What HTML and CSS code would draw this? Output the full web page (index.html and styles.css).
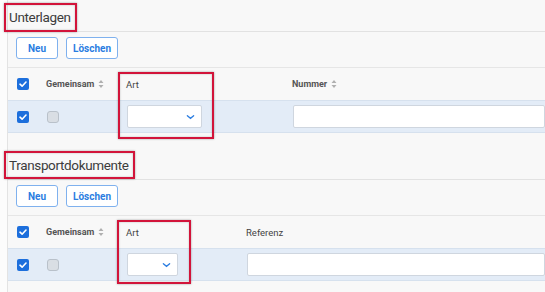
FILE: index.html
```html
<!DOCTYPE html>
<html lang="de">
<head>
<meta charset="utf-8">
<link rel="stylesheet" href="styles.css">
</head>
<body>
<div class="page">
  <section class="sec">
    <div class="title">Unterlagen</div>
    <div class="toolbar">
      <button class="btn btn-neu">Neu</button>
      <button class="btn btn-del">Löschen</button>
    </div>
    <div class="grid g1 head">
      <div class="cell"><span class="cb on"><svg viewBox="0 0 12 12"><path d="M3 6.2 5.1 8.2 9 4" fill="none" stroke="#fff" stroke-width="1.6" stroke-linecap="round" stroke-linejoin="round"/></svg></span></div>
      <div class="cell hb">Gemeinsam <span class="sort"><svg viewBox="0 0 6 10"><path d="M3 1 5.5 4H.5zM3 9 .5 6h5z" fill="#b0b0b0"/></svg></span></div>
      <div class="cell hn">Art</div>
      <div class="cell hb">Nummer <span class="sort"><svg viewBox="0 0 6 10"><path d="M3 1 5.5 4H.5zM3 9 .5 6h5z" fill="#b0b0b0"/></svg></span></div>
    </div>
    <div class="grid g1 row">
      <div class="cell"><span class="cb on"><svg viewBox="0 0 12 12"><path d="M3 6.2 5.1 8.2 9 4" fill="none" stroke="#fff" stroke-width="1.6" stroke-linecap="round" stroke-linejoin="round"/></svg></span></div>
      <div class="cell"><span class="cb off"></span></div>
      <div class="cell"><div class="select s1"><svg viewBox="0 0 10 6"><path d="M1.5 1.5 5 4.5 8.5 1.5" fill="none" stroke="#2a7de1" stroke-width="1.4" stroke-linecap="round"/></svg></div></div>
      <div class="cell"><div class="input"></div></div>
    </div>
  </section>
  <section class="sec sec2">
    <div class="title">Transportdokumente</div>
    <div class="toolbar">
      <button class="btn btn-neu">Neu</button>
      <button class="btn btn-del">Löschen</button>
    </div>
    <div class="grid g2 head">
      <div class="cell"><span class="cb on"><svg viewBox="0 0 12 12"><path d="M3 6.2 5.1 8.2 9 4" fill="none" stroke="#fff" stroke-width="1.6" stroke-linecap="round" stroke-linejoin="round"/></svg></span></div>
      <div class="cell hb">Gemeinsam <span class="sort"><svg viewBox="0 0 6 10"><path d="M3 1 5.5 4H.5zM3 9 .5 6h5z" fill="#b0b0b0"/></svg></span></div>
      <div class="cell hn">Art</div>
      <div class="cell hn">Referenz</div>
    </div>
    <div class="grid g2 row">
      <div class="cell"><span class="cb on"><svg viewBox="0 0 12 12"><path d="M3 6.2 5.1 8.2 9 4" fill="none" stroke="#fff" stroke-width="1.6" stroke-linecap="round" stroke-linejoin="round"/></svg></span></div>
      <div class="cell"><span class="cb off"></span></div>
      <div class="cell"><div class="select s2"><svg viewBox="0 0 10 6"><path d="M1.5 1.5 5 4.5 8.5 1.5" fill="none" stroke="#2a7de1" stroke-width="1.4" stroke-linecap="round"/></svg></div></div>
      <div class="cell"><div class="input"></div></div>
    </div>
  </section>
</div>
<div class="mark m1"></div>
<div class="mark m2"></div>
<div class="mark m3"></div>
<div class="mark m4"></div>
</body>
</html>
```
FILE: styles.css
```css
html, body { margin: 0; padding: 0; }
body {
  width: 545px;
  height: 292px;
  overflow: hidden;
  background: #fcfcfc;
  font-family: Roboto, "Liberation Sans", sans-serif;
  position: relative;
}
.page {
  margin-left: 7px;
  border-left: 1px solid #e3e3e3;
  background: #f8f8f8;
  height: 292px;
}
.sec2 { margin-top: 15px; }
.title {
  height: 31px;
  border-bottom: 1px solid #e2e2e2;
  font-size: 13.5px;
  letter-spacing: -0.35px;
  line-height: 34px;
  color: #3c3c3c;
  padding-left: 1px;
}
.toolbar {
  border-bottom: 1px solid #e6e6e6;
  display: flex;
  gap: 8px;
  padding-left: 8px;
  padding-top: 5px;
  box-sizing: border-box;
  height: 36px;
}
.btn {
  height: 22px;
  padding: 0;
  border: 1px solid #7fb1ee;
  border-radius: 3px;
  background: #fff;
  color: #2a7de1;
  font-family: Roboto, "Liberation Sans", sans-serif;
  font-weight: 700;
  font-size: 10px;
}
.btn-neu { width: 42px; }
.btn-del { width: 52px; }
.grid { display: grid; align-items: center; }
.g1 { grid-template-columns: 38px 80px 166px 1fr; }
.g2 { grid-template-columns: 38px 80px 120px 1fr; }
.head { height: 32px; }
.row {
  height: 31px;
  background: #e3ecf7;
  border-top: 1px solid #d6e1ee;
  border-bottom: 1px solid #d6e1ee;
}
.cell { display: flex; align-items: center; font-size: 9px; }
.cell:first-child { padding-left: 9px; }
.hb { font-weight: 700; color: #555; gap: 4px; }
.hn { color: #444; font-size: 9.5px; }
.sort svg { width: 6px; height: 10px; display: block; }
.cb {
  width: 12px;
  height: 12px;
  border-radius: 2px;
  box-sizing: border-box;
  display: block;
}
.cb svg { width: 12px; height: 12px; display: block; }
.cb.on { background: #1d6fdc; }
.cb.off { background: #d9dee4; border: 1px solid #b9c1ca; border-radius: 3px; margin-left: 1px; }
.select {
  height: 23px;
  background: #fff;
  border: 1px solid #cfd6df;
  border-radius: 2px;
  box-sizing: border-box;
  display: flex;
  align-items: center;
  justify-content: flex-end;
  padding-right: 6px;
  margin-left: 1px;
}
.select svg { width: 9px; height: 6px; display: block; }
.s1 { width: 75px; }
.s2 { width: 51px; }
.input {
  height: 23px;
  flex: 1;
  background: #fff;
  border: 1px solid #cfd6df;
  border-radius: 2px;
  box-sizing: border-box;
  margin-left: 1px;
}
.mark {
  position: absolute;
  border: 2px solid #d2143a;
  box-shadow: 0 0 2px rgba(0,0,0,0.35), inset 0 0 2px rgba(0,0,0,0.25);
  box-sizing: border-box;
}
.m1 { left: 4px; top: 3px; width: 73px; height: 29px; }
.m2 { left: 118px; top: 72px; width: 96px; height: 67px; }
.m3 { left: 4px; top: 151px; width: 131px; height: 28px; }
.m4 { left: 117px; top: 220px; width: 74px; height: 64px; }
```
